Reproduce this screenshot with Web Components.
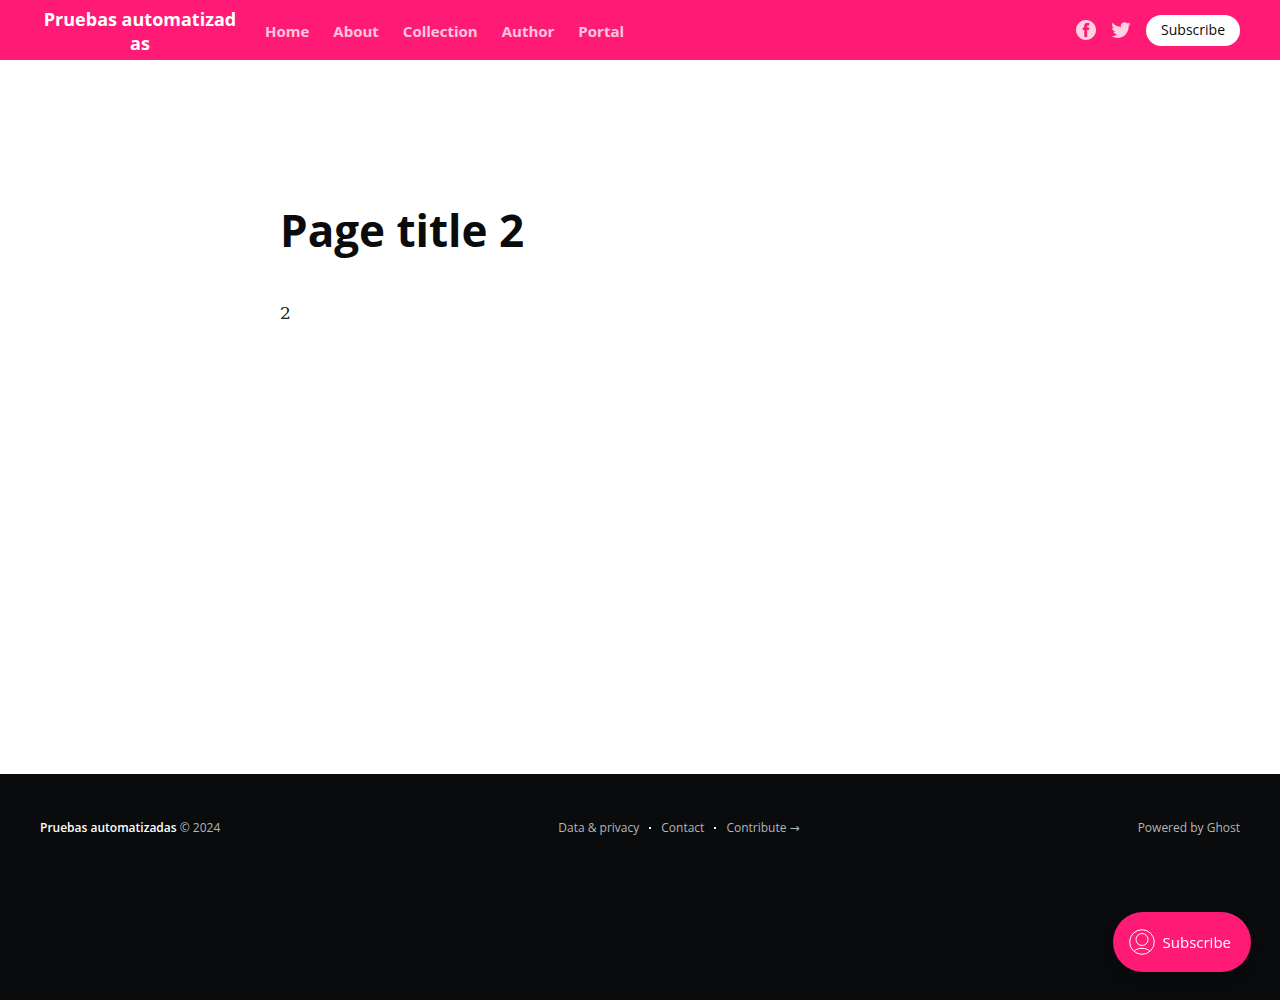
<!DOCTYPE html>
<html lang="es">
<head>
<meta charset="utf-8">
<meta name="viewport" content="width=device-width, initial-scale=1">
<title>Page title 2</title>
<style>
  :root { --accent: #ff1a75; --dark: #0a0b0c; }
  body { margin: 0; background: #fff; font-family: "Open Sans", "Noto Sans", sans-serif; color: var(--dark); }
</style>
</head>
<body>
<site-page>
  <site-header slot="header" name="Pruebas automatizadas">
    <nav-link href="#home">Home</nav-link>
    <nav-link href="#about">About</nav-link>
    <nav-link href="#collection">Collection</nav-link>
    <nav-link href="#author">Author</nav-link>
    <nav-link href="#portal">Portal</nav-link>
  </site-header>
  <site-article><span slot="title">Page title 2</span>2</site-article>
  <site-footer slot="footer" name="Pruebas automatizadas" year="2024"></site-footer>
</site-page>
<portal-trigger>Subscribe</portal-trigger>

<script>
const define = (tag, render) => customElements.define(tag, class extends HTMLElement {
  connectedCallback() {
    if (!this.shadowRoot) this.attachShadow({ mode: 'open' }).innerHTML = render(this);
  }
});

define('site-page', () => `
  <style>
    :host { display: flex; flex-direction: column; min-height: 100vh; }
    main { flex: 1; padding: 0 40px; }
  </style>
  <slot name="header"></slot>
  <main><slot></slot></main>
  <slot name="footer"></slot>`);

define('nav-link', el => `
  <style>
    :host { display: block; }
    a { color: #fff; opacity: .75; text-decoration: none; font-size: 15px; line-height: 20px; font-weight: 700; white-space: nowrap; }
  </style>
  <a href="${el.getAttribute('href')}"><slot></slot></a>`);

define('site-header', el => `
  <style>
    :host { display: flex; align-items: center; height: 60px; padding: 0 40px; background: var(--accent); color: #fff; }
    .logo { width: 200px; flex: none; text-align: center; font-size: 18px; line-height: 24px; font-weight: 700; word-break: break-all; color: #fff; text-decoration: none; padding-top: 2px; }
    nav { display: flex; gap: 24px; margin-left: 25px; padding-top: 2px; flex: 1; }
    .actions { display: flex; align-items: center; }
    .social { display: flex; margin-right: 14px; color: #fff; opacity: .8; }
    svg { display: block; width: 20px; height: 20px; fill: currentColor; }
    svg.bird { width: 22px; height: 22px; }
    button { border: 0; border-radius: 30px; height: 31px; padding: 0 15px; background: #fff; color: var(--dark); font: 14px/20px "Open Sans", "Noto Sans", sans-serif; }
  </style>
  <a class="logo" href="#home">${el.getAttribute('name')}</a>
  <nav><slot></slot></nav>
  <div class="actions">
    <a class="social" href="#facebook" aria-label="Facebook"><svg viewBox="0 0 32 32"><path d="M16 0c8.837 0 16 7.163 16 16s-7.163 16-16 16S0 24.837 0 16 7.163 0 16 0zm5.204 4.911h-3.546c-2.103 0-4.443.885-4.443 3.934.01 1.062 0 2.08 0 3.225h-2.433v3.872h2.509v11.147h4.61v-11.22h3.042l.275-3.81h-3.397s.007-1.695 0-2.187c0-1.205 1.253-1.136 1.329-1.136.596 0 1.756.002 2.054 0V4.911z"/></svg></a>
    <a class="social" href="#twitter" aria-label="Twitter"><svg class="bird" viewBox="0 0 32 32"><path d="M30.063 7.313c-.813 1.125-1.75 2.125-2.875 2.938v.75c0 1.563-.188 3.125-.688 4.625a15.088 15.088 0 0 1-2.063 4.438c-.875 1.438-2 2.688-3.25 3.813a15.015 15.015 0 0 1-4.625 2.563c-1.813.688-3.75 1-5.75 1-3.25 0-6.188-.875-8.875-2.625.438.063.875.125 1.375.125 2.688 0 5.063-.875 7.188-2.5-1.25 0-2.375-.375-3.375-1.125s-1.688-1.688-2.063-2.875c.438.063.813.125 1.125.125.5 0 1-.063 1.5-.25-1.313-.25-2.438-.938-3.313-1.938a5.673 5.673 0 0 1-1.313-3.688v-.063c.813.438 1.688.688 2.625.688a5.228 5.228 0 0 1-1.875-2c-.5-.875-.688-1.813-.688-2.75 0-1.063.25-2.063.75-2.938 1.438 1.75 3.188 3.188 5.25 4.25s4.313 1.688 6.688 1.813a5.579 5.579 0 0 1 1.5-5.438c1.125-1.125 2.5-1.688 4.125-1.688s3.063.625 4.188 1.813a11.48 11.48 0 0 0 3.688-1.375c-.438 1.375-1.313 2.438-2.563 3.188 1.125-.125 2.188-.438 3.313-.875z"/></svg></a>
    <button type="button">Subscribe</button>
  </div>`);

define('site-article', () => `
  <style>
    :host { display: block; max-width: 720px; margin: 0 auto; padding: 144px 0 80px; }
    h1 { margin: 0; font-size: 44px; line-height: 52px; font-weight: 700; }
    p { margin: 41px 0 0; font: 17px/32px "DejaVu Serif", serif; color: #222; }
  </style>
  <h1><slot name="title"></slot></h1>
  <p><slot></slot></p>`);

define('site-footer', el => `
  <style>
    :host { display: block; background: var(--dark); color: #fff; padding: 44px 40px 162px; font-size: 12px; line-height: 20px; }
    .inner { display: grid; grid-template-columns: auto 1fr auto; gap: 40px; }
    a { color: inherit; text-decoration: none; }
    .muted, nav a { color: #b5b6b6; }
    .name { font-weight: 600; color: #fff; }
    nav { display: flex; justify-content: center; align-items: center; gap: 10px; }
    i { width: 2px; height: 2px; background: #fff; }
    .arrow { font-family: "DejaVu Sans", sans-serif; }
  </style>
  <div class="inner">
    <div class="muted"><a class="name" href="#home">${el.getAttribute('name')}</a> © ${el.getAttribute('year')}</div>
    <nav><a href="#privacy">Data &amp; privacy</a><i></i><a href="#contact">Contact</a><i></i><a href="#contribute">Contribute <span class="arrow">→</span></a></nav>
    <div class="muted"><a href="#ghost">Powered by Ghost</a></div>
  </div>`);

define('portal-trigger', () => `
  <style>
    :host { display: block; position: fixed; right: 29px; bottom: 28px; }
    button { display: flex; align-items: center; gap: 8px; height: 60px; padding: 0 20px 0 16px; border: 0; border-radius: 30px; background: var(--accent); color: #fff; font: 15px/20px "Open Sans", "Noto Sans", sans-serif; box-shadow: 0 8px 16px -4px rgba(0,0,0,.25); }
    svg { width: 26px; height: 26px; fill: none; stroke: #fff; stroke-width: 1; }
  </style>
  <button type="button">
    <svg viewBox="0 0 26 26" aria-hidden="true"><circle cx="13" cy="13" r="12.3"/><circle cx="13" cy="10.500" r="6"/><path d="M5 22.3c1.800-2 4.800-3 8-3s6.200 1 8 3"/></svg>
    <slot></slot>
  </button>`);
</script>
</body>
</html>
